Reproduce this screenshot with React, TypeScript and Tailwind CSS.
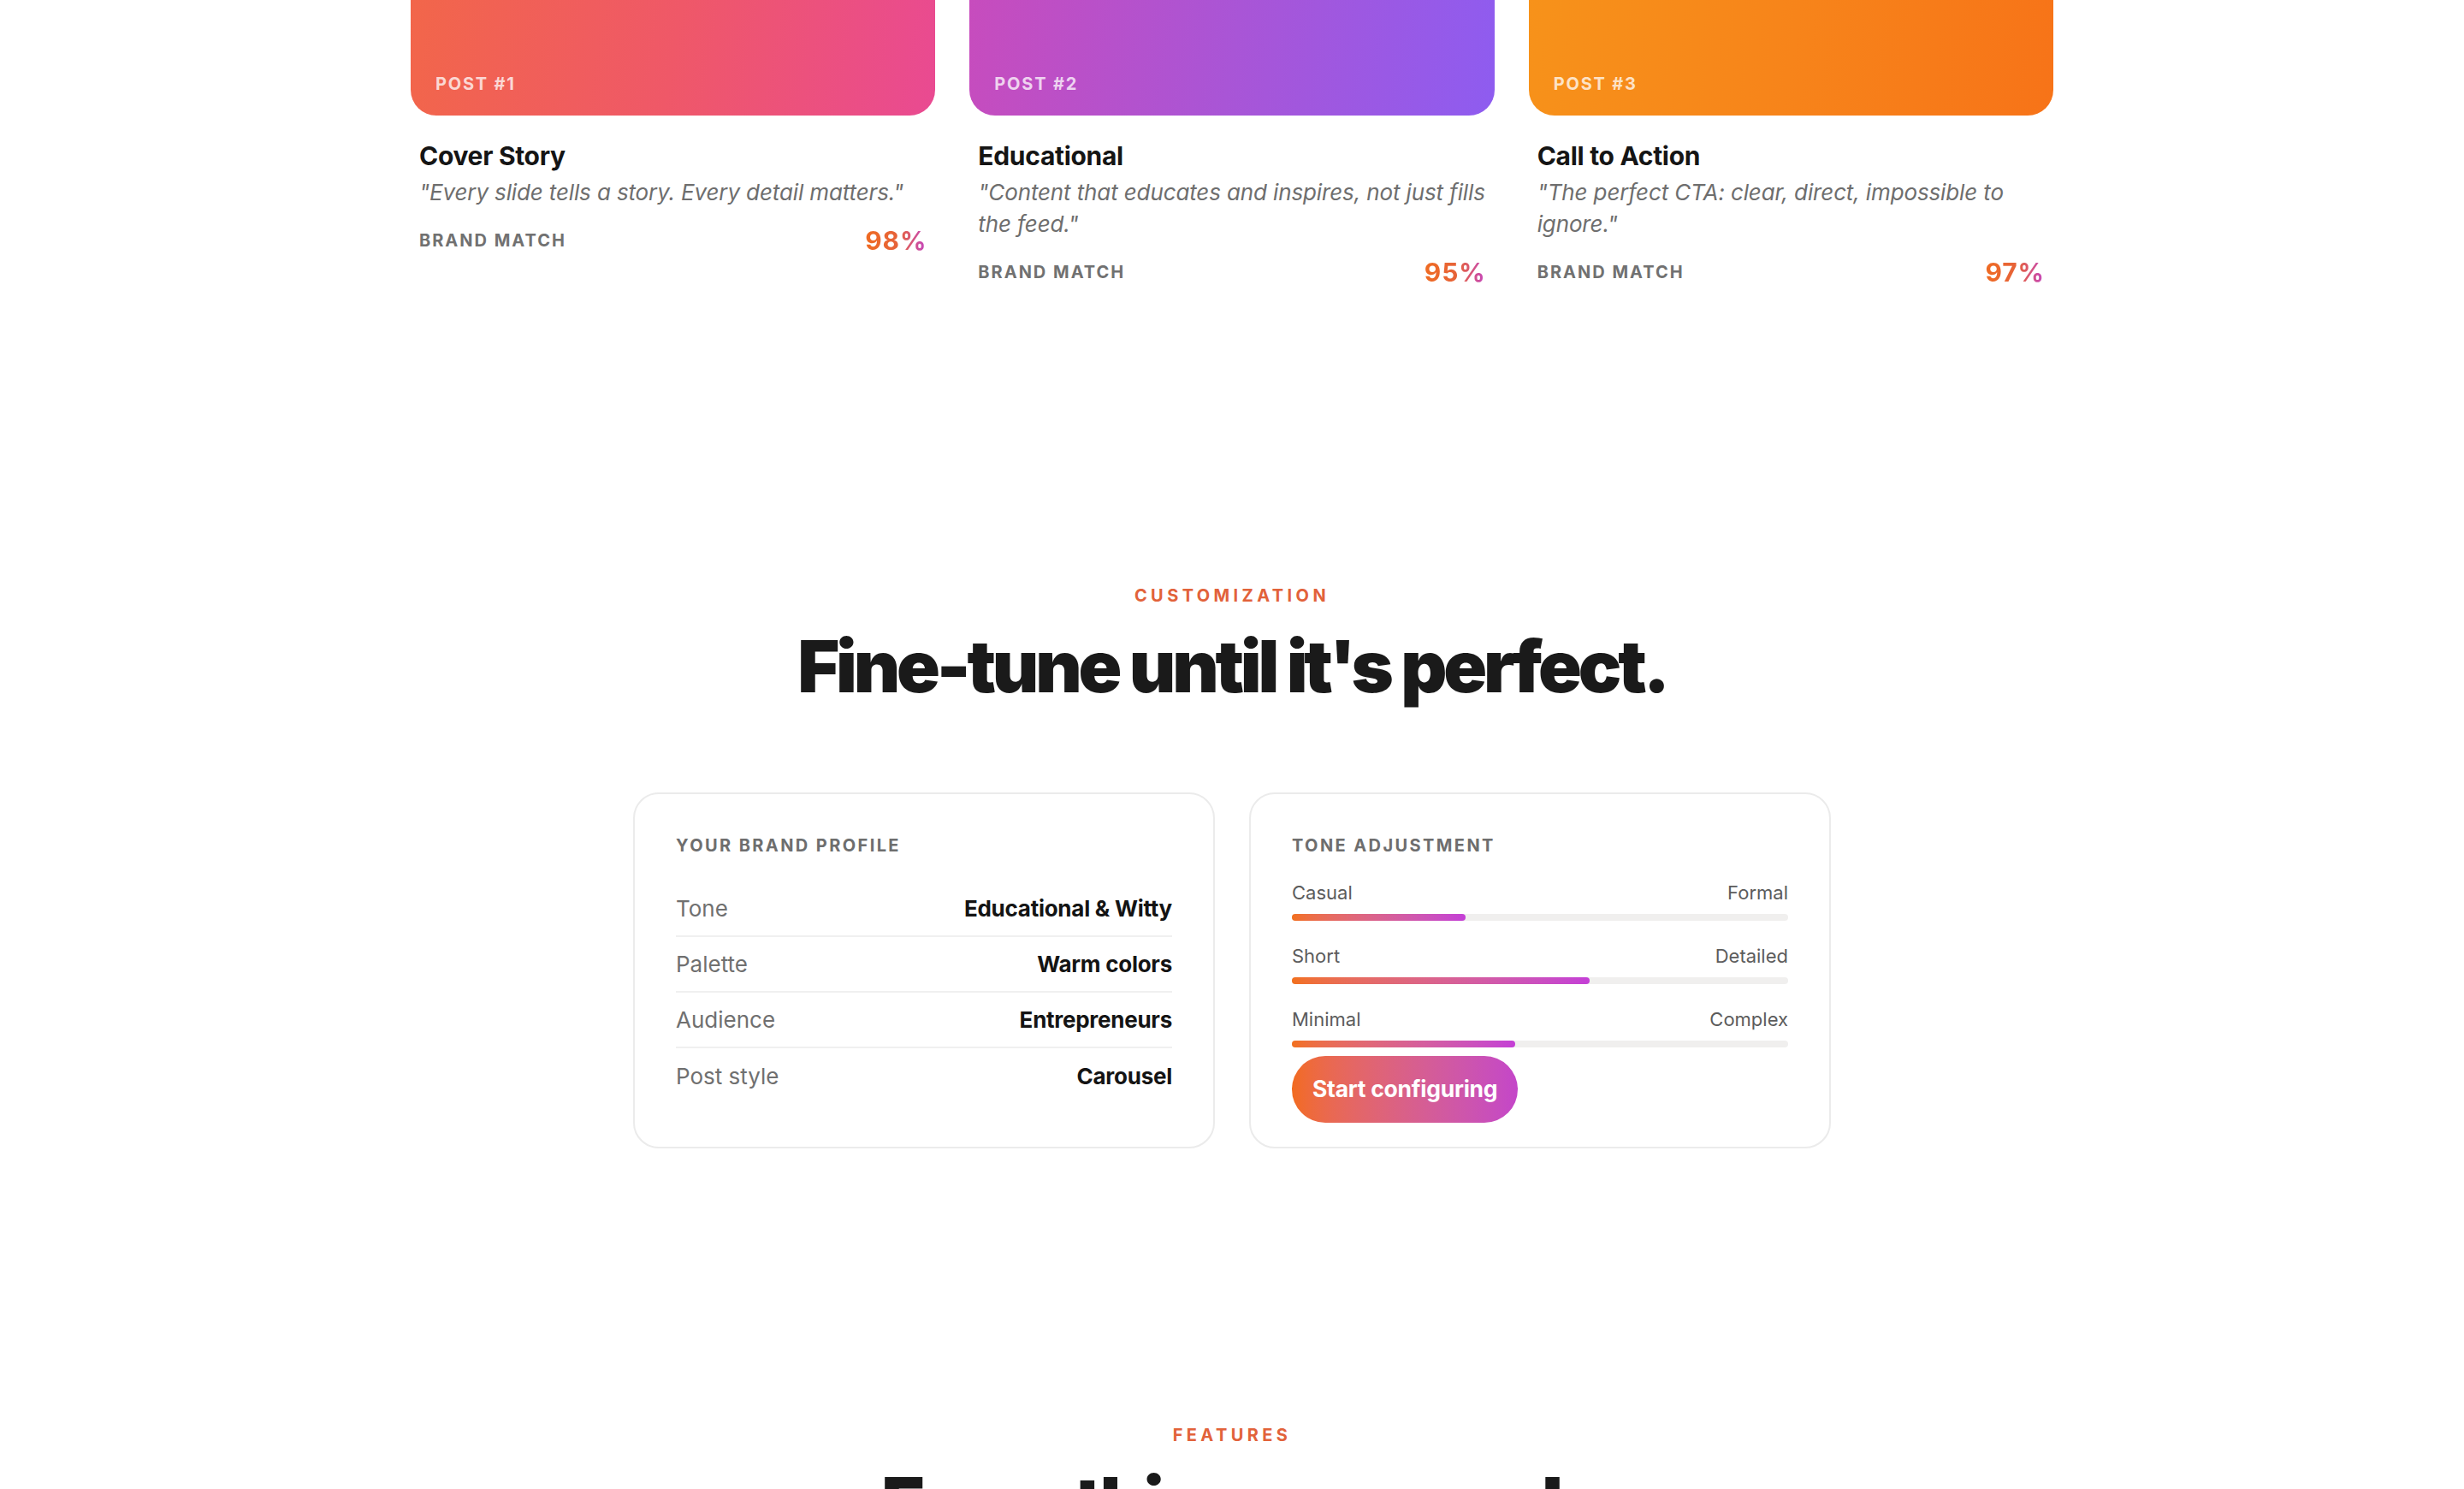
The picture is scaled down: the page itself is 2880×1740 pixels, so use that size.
const posts = [
  {
    label: 'POST #1',
    title: 'Cover Story',
    quote: '"Every slide tells a story. Every detail matters."',
    match: '98%',
    bg: 'bg-[linear-gradient(100deg,#f2664a_0%,#ef5868_50%,#e94a92_100%)]',
  },
  {
    label: 'POST #2',
    title: 'Educational',
    quote: '"Content that educates and inspires, not just fills the feed."',
    match: '95%',
    bg: 'bg-[linear-gradient(100deg,#c74cbd_0%,#a955d6_50%,#8e5cf0_100%)]',
  },
  {
    label: 'POST #3',
    title: 'Call to Action',
    quote: '"The perfect CTA: clear, direct, impossible to ignore."',
    match: '97%',
    bg: 'bg-[linear-gradient(100deg,#f7921a_0%,#f7841a_50%,#f77318_100%)]',
  },
]

const profile = [
  { label: 'Tone', value: 'Educational & Witty' },
  { label: 'Palette', value: 'Warm colors' },
  { label: 'Audience', value: 'Entrepreneurs' },
  { label: 'Post style', value: 'Carousel' },
]

const sliders = [
  { left: 'Casual', right: 'Formal', value: 35 },
  { left: 'Short', right: 'Detailed', value: 60 },
  { left: 'Minimal', right: 'Complex', value: 45 },
]

function Eyebrow({ children }: { children: string }) {
  return (
    <p className="text-center text-[20px] leading-[28px] font-bold tracking-[0.22em] text-[#e2623a]">
      {children}
    </p>
  )
}

function PostCard({ post }: { post: (typeof posts)[number] }) {
  return (
    <div className="flex flex-col">
      <div className={`h-[135px] rounded-b-[30px] ${post.bg} flex items-end px-[29px] pb-[23px]`}>
        <span className="text-[20px] leading-[28px] font-bold tracking-[0.09em] text-white/75">
          {post.label}
        </span>
      </div>
      <div className="px-[10px]">
        <h3 className="mt-[29px] text-[30px] leading-[36px] font-bold tracking-[-0.01em] text-[#151515]">
          {post.title}
        </h3>
        <p className="mt-[6px] text-[26px] leading-[37px] italic tracking-[-0.005em] text-[#6e6e6e]">{post.quote}</p>
        <div className="mt-[22px] flex items-center justify-between">
          <span className="text-[20px] font-bold tracking-[0.1em] text-[#717171]">BRAND MATCH</span>
          <span className="text-[30px] leading-[32px] font-bold tracking-[0.03em] bg-[linear-gradient(90deg,#ef6b22_0%,#e6623a_55%,#c446c4_100%)] bg-clip-text text-transparent">
            {post.match}
          </span>
        </div>
      </div>
    </div>
  )
}

export default function App() {
  return (
    <div className="min-h-screen bg-white font-['Inter',sans-serif] overflow-hidden">
      {/* Post previews */}
      <section className="mx-auto w-[1920px] grid grid-cols-3 gap-10">
        {posts.map((p) => (
          <PostCard key={p.label} post={p} />
        ))}
      </section>

      {/* Customization */}
      <section className="pt-[348px]">
        <Eyebrow>CUSTOMIZATION</Eyebrow>
        <h2 className="mt-[23px] text-center text-[84px] leading-[92px] font-black tracking-[-0.05em] text-[#1a1a1a]">
          Fine-tune until it's perfect.
        </h2>

        <div className="mx-auto mt-[101px] w-[1400px] grid grid-cols-2 gap-10">
          <div className="rounded-[30px] border-2 border-[#ebebeb] bg-white px-12 pt-[46px] pb-[50px]">
            <h4 className="text-[20px] leading-[28px] font-bold tracking-[0.12em] text-[#6e6e6e]">
              YOUR BRAND PROFILE
            </h4>
            <div className="mt-[28px]">
              {profile.map((row, i) => (
                <div
                  key={row.label}
                  className={`flex h-[65px] items-center justify-between ${i < profile.length - 1 ? 'border-b-2 border-[#f0f0f0]' : ''}`}
                >
                  <span className="text-[26px] text-[#707070]">{row.label}</span>
                  <span className="text-[26px] font-bold tracking-[-0.01em] text-[#141414]">{row.value}</span>
                </div>
              ))}
            </div>
          </div>

          <div className="rounded-[30px] border-2 border-[#ebebeb] bg-white px-12 pt-[46px] pb-[28px]">
            <h4 className="text-[20px] leading-[28px] font-bold tracking-[0.12em] text-[#6e6e6e]">
              TONE ADJUSTMENT
            </h4>
            <div className="mt-[26px] flex flex-col gap-[26px]">
              {sliders.map((s) => (
                <div key={s.left}>
                  <div className="flex justify-between text-[22px] leading-[30px] text-[#5c5c5c]">
                    <span>{s.left}</span>
                    <span>{s.right}</span>
                  </div>
                  <div className="mt-[10px] h-2 rounded-full bg-[#f0efee]">
                    <div
                      className="h-2 rounded-full bg-gradient-to-r from-[#f2701c] to-[#c43fd6]"
                      style={{ width: `${s.value}%` }}
                    />
                  </div>
                </div>
              ))}
            </div>
            <button className="mt-[10px] h-[78px] rounded-full bg-gradient-to-r from-[#f26b1d] to-[#c446c9] px-6 text-[26.5px] font-bold tracking-[-0.01em] text-white">
              Start configuring
            </button>
          </div>
        </div>
      </section>

      {/* Features */}
      <section className="pt-[321px]">
        <Eyebrow>FEATURES</Eyebrow>
        <h2 className="mt-[20px] text-center text-[84px] leading-[92px] font-black tracking-[-0.05em] text-[#1a1a1a]">
          Everything you need.
        </h2>
      </section>
    </div>
  )
}
